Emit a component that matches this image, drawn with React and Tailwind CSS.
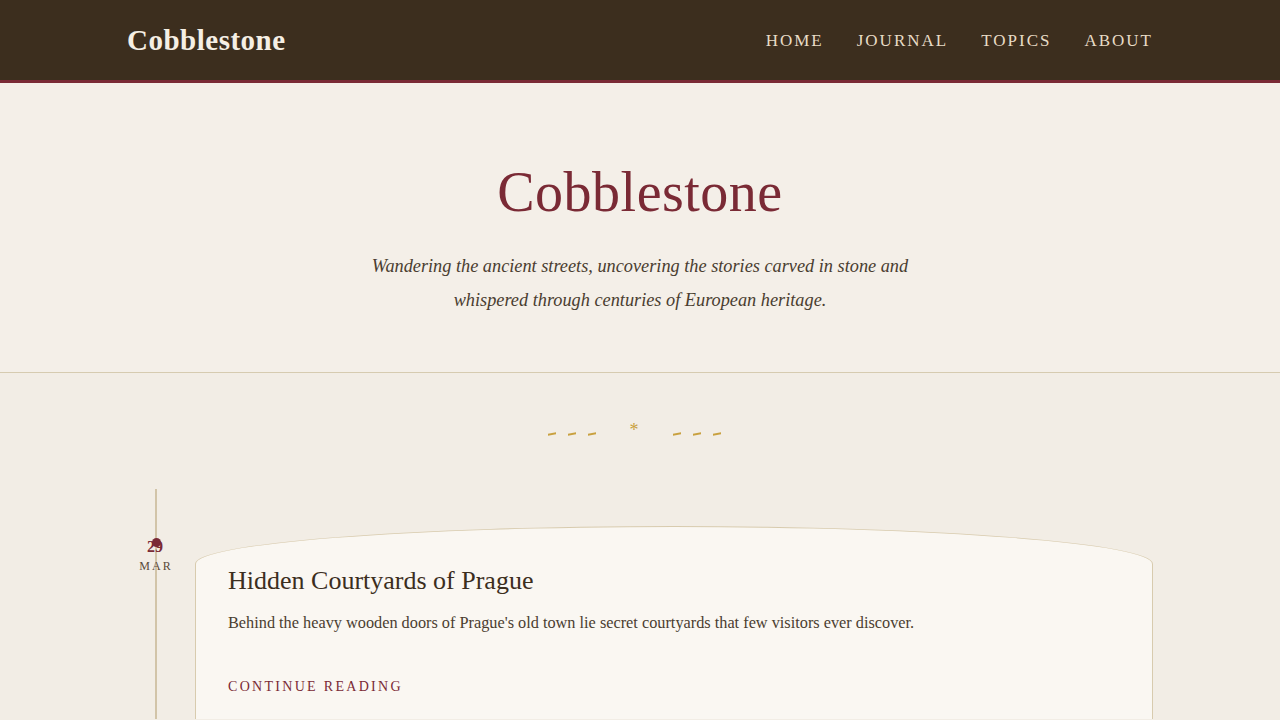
export default function App() {
  const serif = { fontFamily: '"Liberation Serif", "DejaVu Serif", serif' };
  return (
    <div className="min-h-[720px] bg-[#f2ede5]" style={serif}>
      <header className="h-[83px] bg-[#3c2e1e] border-b-[3px] border-[#7a2a35]">
        <div className="mx-auto w-[1026px] h-full flex items-center justify-between">
          <div className="text-[29px] font-bold tracking-[0.5px] text-[#f5efe4] leading-none pt-[1px]">Cobblestone</div>
          <nav className="flex items-center gap-[33px] text-[17px] tracking-[2px] text-[#e8dcc6] pt-[2px]">
            <a>HOME</a>
            <a>JOURNAL</a>
            <a>TOPICS</a>
            <a>ABOUT</a>
          </nav>
        </div>
      </header>

      <section className="bg-[#f4efe8] border-b border-[#d6cbb0] h-[290px] flex flex-col items-center pt-[81px]">
        <h1 className="text-[56px] leading-none text-[#7a2a35] tracking-[0.5px]">Cobblestone</h1>
        <p className="mt-[29px] text-center italic text-[18.3px] leading-[34px] text-[#4a3d30]">
          Wandering the ancient streets, uncovering the stories carved in stone and
          <br />
          whispered through centuries of European heritage.
        </p>
      </section>

      <div className="flex justify-center items-center gap-[34px] pt-[41px] h-[116px] pb-[44px] text-[#c9a13f] pr-[12px]">
        <div className="flex gap-[12px] pt-[8px]">
          <span className="block w-[8px] h-[2px] bg-[#c9a13f] -skew-y-12"></span>
          <span className="block w-[8px] h-[2px] bg-[#c9a13f] -skew-y-12"></span>
          <span className="block w-[8px] h-[2px] bg-[#c9a13f] -skew-y-12"></span>
        </div>
        <span className="text-[18px] leading-none">*</span>
        <div className="flex gap-[12px] pt-[8px]">
          <span className="block w-[8px] h-[2px] bg-[#c9a13f] -skew-y-12"></span>
          <span className="block w-[8px] h-[2px] bg-[#c9a13f] -skew-y-12"></span>
          <span className="block w-[8px] h-[2px] bg-[#c9a13f] -skew-y-12"></span>
        </div>
      </div>

      <div className="relative mx-auto w-[1026px] pt-[37px] h-[230px] overflow-hidden">
        <div className="absolute left-[28px] top-0 bottom-0 w-[2px] bg-[#d2c4a8]"></div>
        <div className="flex">
          <div className="relative w-[56px] flex flex-col items-center pt-[12px]">
            <div className="text-[16px] font-bold text-[#7a2a35] leading-[18px]">29</div>
            <div className="mt-[4px] text-[12px] tracking-[2px] text-[#5a4a3a] leading-none pl-[2px]">MAR</div>
            <div className="absolute top-[12px] left-[24.5px] w-[9px] h-[9px] rounded-full bg-[#7a2a35]"></div>
          </div>
          <article className="ml-[12px] flex-1 h-[220px] bg-[#faf7f2] border border-[#d8cbae] rounded-[50%_50%_0_0/38px_38px_0_0] pt-[38px] px-[32px]">
            <h2 className="text-[26px] text-[#3c2e1e] leading-[32px]">Hidden Courtyards of Prague</h2>
            <p className="mt-[14px] text-[16.3px] text-[#4a3d30] leading-[24px]">
              Behind the heavy wooden doors of Prague's old town lie secret courtyards that few visitors ever discover.
            </p>
            <a className="block mt-[45px] text-[14px] tracking-[2.3px] text-[#7a2a35] leading-none">CONTINUE READING</a>
          </article>
        </div>
      </div>
    </div>
  );
}
